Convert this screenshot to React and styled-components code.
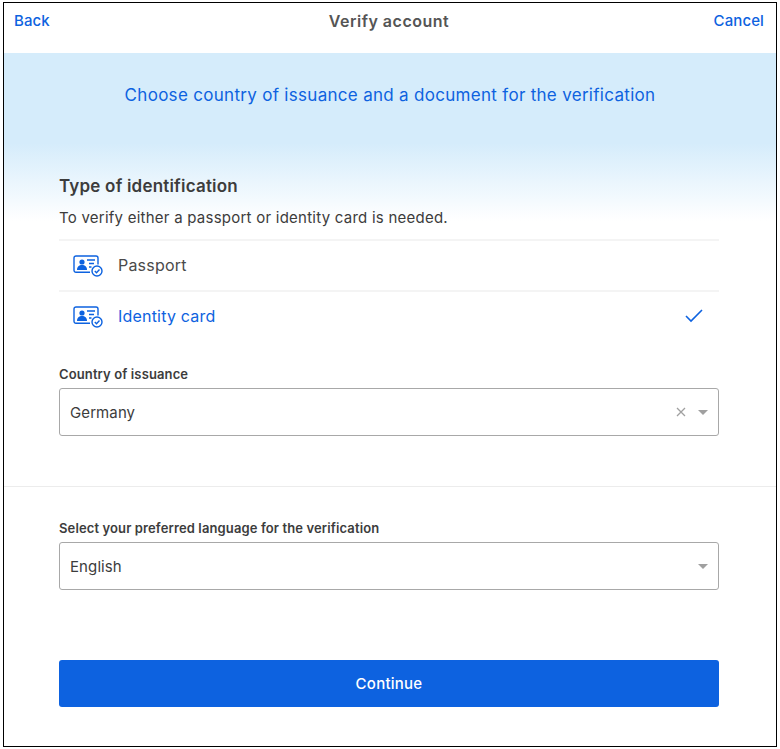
import React from "react";
import styled, { createGlobalStyle } from "styled-components";

const Global = createGlobalStyle`
  html, body { margin: 0; padding: 0; background: #fff; }
  * { box-sizing: border-box; }
  body { font-family: "Inter", "Open Sans", sans-serif; color: #3c3c3c; }
`;
const Page = styled.div`
  width: 780px; height: 749px; padding: 2px 3px 2px 3px;
`;
const Frame = styled.div`
  width: 774px; height: 745px; border: 1px solid #000; display: flex; flex-direction: column; background: #fff;
`;
const Header = styled.header`
  height: 50px; flex: none; display: grid; grid-template-columns: 1fr auto 1fr; align-items: start; padding: 10px 12px 0 10px;
  font-size: 15px; line-height: 16px;
`;
const LinkText = styled.span`
  color: #0d62e0; font-weight: 500; letter-spacing: 0.1px;
  text-align: ${p => (p.$end ? "right" : "left")};
`;
const Title = styled.span`
  font-weight: 600; color: #555; font-size: 16px; letter-spacing: 0.5px;
`;
const Banner = styled.div`
  height: 168px; flex: none; background: linear-gradient(#d5ecfb 0, #d5ecfb 90px, #fff 100%);
  display: flex; justify-content: center; padding-top: 32px;
`;
const BannerText = styled.p`
  margin: 0; font-size: 17px; line-height: 20px; color: #0d62e0; letter-spacing: 0.3px;
`;
const Section = styled.section`
  padding: 0 57px 0 55px; display: flex; flex-direction: column;
`;
const SubTitle = styled.h2`
  margin: -45px 0 0; font-size: 17px; line-height: 20px; font-weight: 600; color: #3c3c3c; position: relative; letter-spacing: 0.2px;
`;
const Lead = styled.p`
  margin: 12px 0 11px; font-size: 15px; line-height: 20px; color: #3c3c3c; position: relative; letter-spacing: 0.24px;
`;
const Option = styled.div`
  height: 51px; border-top: 2px solid #f4f4f4; display: flex; align-items: center; padding: 0 16px 2px 14px;
  gap: 15px; font-size: 16px; letter-spacing: 0.2px; color: ${p => (p.$active ? "#0d62e0" : "#4a4a4a")};
  &:last-of-type { height: 53px; border-bottom: 2px solid #f4f4f4; }
`;
const OptionLabel = styled.span`flex: 1;`;
const OptionIcon = styled.svg`
  margin-top: 3px; flex: none;
`;
const FieldLabel = styled.label`
  display: block; font-size: 13px; line-height: 16px; font-weight: 600; color: #3c3c3c; margin-bottom: 6px; letter-spacing: 0.12px;
  margin-top: ${p => p.$top}px;
`;
const Select = styled.div`
  height: 48px; border: 1px solid #a8a8a8; border-radius: 3px; display: flex; align-items: center; padding: 0 10px;
  font-size: 15px; color: #3c3c3c; letter-spacing: 0.1px;
`;
const SelectValue = styled.span`flex: 1;`;
const Caret = styled.span`
  width: 0; height: 0; border-left: 5px solid transparent; border-right: 5px solid transparent; border-top: 5px solid #a0a0a0; margin-left: 12px;
`;
const Divider = styled.hr`
  margin: 50px 0 0; border: 0; border-top: 1px solid #ececec;
`;
const Button = styled.button`
  margin-top: 70px; height: 47px; width: 100%; border: 0; border-radius: 3px; background: #0d62e0; color: #fff;
  font: 500 15px "Inter", sans-serif; letter-spacing: 0.25px;
`;

const IdIcon = () => (
  <OptionIcon width="30" height="22" viewBox="0 0 30 22" fill="none" stroke="#0d62e0" strokeWidth="1.4">
    <path d="M17 17.300H3a2 2 0 0 1-2-2V3a2 2 0 0 1 2-2h20a2 2 0 0 1 2 2v6.500" />
    <circle cx="9" cy="7" r="2.600" fill="#0d62e0" stroke="none" />
    <path d="M4 15c0-3.500 2-5 5-5s5 1.500 5 5z" fill="#0d62e0" stroke="none" />
    <path d="M14 5h8M16 8.500h5M16 12h2.500" />
    <circle cx="24" cy="16" r="5" />
    <path d="M21.800 16l1.700 1.700 3-3.200" />
  </OptionIcon>
);

export default function App() {
  return (
    <Page>
      <Global />
      <Frame>
        <Header>
          <LinkText>Back</LinkText>
          <Title>Verify account</Title>
          <LinkText $end>Cancel</LinkText>
        </Header>
        <Banner><BannerText>Choose country of issuance and a document for the verification</BannerText></Banner>
        <Section>
          <SubTitle>Type of identification</SubTitle>
          <Lead>To verify either a passport or identity card is needed.</Lead>
          <Option><IdIcon /><OptionLabel>Passport</OptionLabel></Option>
          <Option $active><IdIcon /><OptionLabel>Identity card</OptionLabel>
            <svg width="18" height="14" viewBox="0 0 18 14" fill="none" stroke="#0d62e0" strokeWidth="1.600"><path d="M1 7l5 5L17 1" /></svg>
          </Option>
          <FieldLabel $top={25}>Country of issuance</FieldLabel>
          <Select><SelectValue>Germany</SelectValue>
            <svg width="10" height="10" viewBox="0 0 10 10" stroke="#a0a0a0" strokeWidth="1.300"><path d="M1 1l8 8M9 1l-8 8" /></svg>
            <Caret />
          </Select>
        </Section>
        <Divider />
        <Section>
          <FieldLabel $top={33}>Select your preferred language for the verification</FieldLabel>
          <Select><SelectValue>English</SelectValue><Caret /></Select>
          <Button>Continue</Button>
        </Section>
      </Frame>
    </Page>
  );
}
